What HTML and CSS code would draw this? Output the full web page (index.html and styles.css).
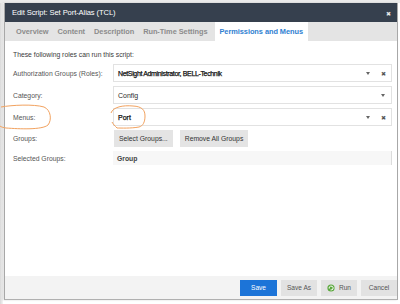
FILE: index.html
```html
<!DOCTYPE html>
<html>
<head>
<meta charset="utf-8">
<link rel="stylesheet" href="styles.css">
</head>
<body>
<div class="dialog">
  <div class="titlebar">
    <span class="title">Edit Script: Set Port-Alias (TCL)</span>
    <span class="close">&#x2716;</span>
  </div>
  <div class="tabs">
    <span class="tab">Overview</span>
    <span class="tab">Content</span>
    <span class="tab">Description</span>
    <span class="tab">Run-Time Settings</span>
    <span class="tab active">Permissions and Menus</span>
  </div>
  <div class="content">
    <div class="intro">These following roles can run this script:</div>
    <div class="form">
      <div class="label">Authorization Groups (Roles):</div>
      <div class="field">
        <span class="value strong tight">NetSight Administrator, BELL-Technik</span>
        <span class="arrow"></span><span class="clear">&#x2716;</span>
      </div>
      <div class="label">Category:</div>
      <div class="field">
        <span class="value">Config</span>
        <span class="arrow"></span>
      </div>
      <div class="label">Menus:</div>
      <div class="field">
        <span class="value strong">Port</span>
        <span class="arrow"></span><span class="clear">&#x2716;</span>
      </div>
      <div class="label">Groups:</div>
      <div class="buttons">
        <span class="btn">Select Groups...</span>
        <span class="btn">Remove All Groups</span>
      </div>
      <div class="label sel">Selected Groups:</div>
      <div class="grid-head">Group</div>
    </div>
  </div>
  <div class="footer">
    <span class="fbtn primary">Save</span>
    <span class="fbtn">Save As</span>
    <span class="fbtn run"><svg class="runicon" width="8" height="8" viewBox="0 0 8 8"><circle cx="4" cy="4" r="3.6" fill="#5aa83c"/><path d="M2.2 4.6 A2 2 0 1 1 4.6 6" fill="none" stroke="#fff" stroke-width="1"/><path d="M3.4 6.6 L4.9 6 L4 4.8 Z" fill="#fff"/></svg>Run</span>
    <span class="fbtn">Cancel</span>
  </div>
</div>
<svg class="mark mark-menus" width="56" height="28" viewBox="0 0 56 28">
  <path d="M1 3 C12 1 34 0 44 3 C51 6 52 16 48 21 C42 26 20 25 6 24 C3 23.5 1 23 0 22" fill="none" stroke="#f2a25f" stroke-width="1"/>
</svg>
<svg class="mark mark-port" width="42" height="26" viewBox="0 0 42 26">
  <path d="M2 9 C4 3 14 1 24 2 C33 2.5 36 6 36 12 C36 18 34 22 30 23 C22 24.5 12 24 8 24 C6 22 4 20 3 18" fill="none" stroke="#f2a25f" stroke-width="1"/>
</svg>
</body>
</html>
```
FILE: styles.css
```css
html, body {
  margin: 0;
  padding: 0;
}
body {
  width: 400px;
  height: 304px;
  overflow: hidden;
  background: linear-gradient(#ebebeb, #ebebeb) top left / 100% 3px no-repeat,
              linear-gradient(90deg, #d8d8d8, #f4f4f4) top left / 3px 100% no-repeat,
              #fff;
  font-family: "Liberation Sans", Arial, sans-serif;
  position: relative;
}
.dialog {
  margin: 3px 0 0 4px;
  width: 392px;
  height: 296px;
  display: flex;
  flex-direction: column;
  background: #fff;
  border-left: 1px solid #a8a8a8;
  border-right: 1px solid #a8a8a8;
  border-bottom: 1px solid #b0b0b0;
  box-shadow: -1px 0 2px rgba(0,0,0,0.15);
}
.titlebar {
  height: 19px;
  background: #36404e;
  color: #fff;
  display: flex;
  align-items: center;
  justify-content: space-between;
  padding: 0 6px 0 7px;
  flex: none;
}
.title {
  font-size: 7.6px;
  letter-spacing: -0.1px;
}
.close {
  font-size: 6px;
  color: #e8e8e8;
  margin-top: 1px;
}
.tabs {
  height: 19px;
  background: #e4e4e4;
  display: flex;
  align-items: stretch;
  padding-left: 7px;
  flex: none;
}
.tab {
  display: flex;
  align-items: center;
  padding: 0 4px;
  margin-right: 1px;
  font-size: 7.4px;
  font-weight: bold;
  color: #8c8c8c;
  letter-spacing: -0.05px;
}
.tab.active {
  background: #fff;
  color: #2f80d1;
  padding: 0 5px 0 4px;
  margin-left: 3px;
}
.content {
  flex: 1;
  padding: 10px 5px 0 8px;
}
.intro {
  font-size: 6.8px;
  color: #3a3a3a;
  line-height: 8px;
  margin-bottom: 5px;
}
.form {
  display: grid;
  grid-template-columns: 100px 1fr;
  grid-template-rows: 18px 18px 18px 17px 14px;
  row-gap: 4px;
  align-items: center;
}
.label {
  font-size: 6.8px;
  color: #555;
}
.field {
  height: 18px;
  box-sizing: border-box;
  border: 1px solid #e2e2e2;
  display: flex;
  align-items: center;
  padding: 0 5px 0 4px;
  font-size: 7px;
  color: #2b2b2b;
}
.value {
  flex: 1;
}
.value.strong {
  color: #111;
  -webkit-text-stroke: 0.25px #111;
}
.value.tight {
  letter-spacing: -0.35px;
}
.arrow {
  width: 0;
  height: 0;
  border-left: 2.5px solid transparent;
  border-right: 2.5px solid transparent;
  border-top: 3px solid #666;
  margin-right: 1px;
}
.clear {
  font-size: 6px;
  color: #555;
  margin-left: 10px;
}
.buttons {
  display: flex;
  gap: 7px;
  height: 17px;
}
.btn {
  display: flex;
  align-items: center;
  background: #e4e4e4;
  color: #333;
  font-size: 6.8px;
  padding: 0 5px;
  margin-left: 1px;
}
.btn + .btn {
  margin-left: 0;
}
.label.sel {
  padding-top: 1px;
}
.grid-head {
  height: 14px;
  background: #f7f7f7;
  border-right: 1px solid #dcdcdc;
  font-size: 6.8px;
  font-weight: bold;
  color: #444;
  display: flex;
  align-items: center;
  padding-left: 4px;
}
.footer {
  height: 23px;
  flex: none;
  background: #f3f3f3;
  display: flex;
  align-items: center;
  justify-content: flex-end;
  gap: 4px;
  padding-right: 0;
}
.fbtn {
  height: 16px;
  width: 36px;
  display: flex;
  align-items: center;
  justify-content: center;
  background: #e2e2e2;
  color: #555;
  font-size: 6.6px;
}
.fbtn.primary {
  width: 37px;
  background: #1c74d8;
  color: #fff;
}
.runicon {
  margin-right: 4px;
}
.mark {
  position: absolute;
}
.mark-menus {
  left: 0;
  top: 104px;
}
.mark-port {
  left: 109px;
  top: 104px;
}
```
